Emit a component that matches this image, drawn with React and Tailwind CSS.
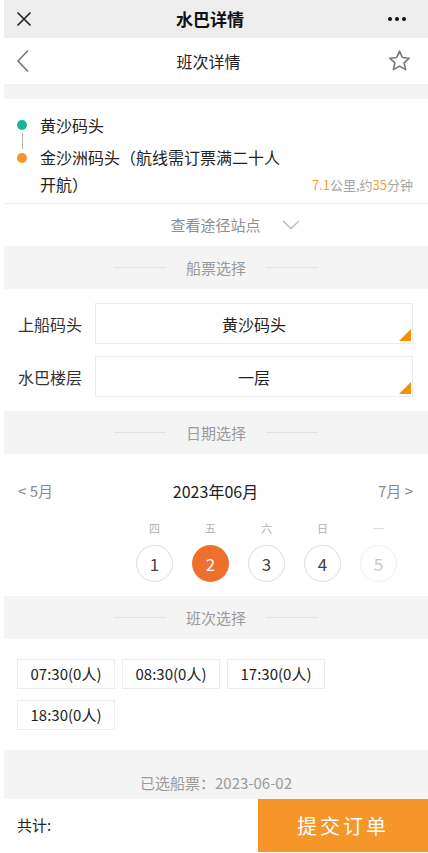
import { useState } from "react";

const font = { fontFamily: '"Noto Sans CJK SC", "Noto Sans", sans-serif' };

function SectionTitle({ children, className = "" }) {
  return (
    <div className={`flex items-center justify-center gap-[20px] bg-[#f4f4f4] ${className}`}>
      <span className="h-px w-[52px] bg-[#e2e2e2]" />
      <span className="text-[15px] leading-[22px] text-[#9a9a9a]">{children}</span>
      <span className="h-px w-[52px] bg-[#e2e2e2]" />
    </div>
  );
}

function Picker({ label, value }) {
  return (
    <div className="flex items-center">
      <span className="w-[91px] whitespace-nowrap pl-[14px] text-[16px] text-[#333]">{label}</span>
      <div className="relative flex h-[41px] w-[318px] items-center justify-center border border-[#ececec] bg-white text-[16px] text-[#222]">
        {value}
        <span className="absolute bottom-[2px] right-[1px] h-0 w-0 border-b-[12px] border-l-[12px] border-b-[#f39200] border-l-transparent" />
      </div>
    </div>
  );
}

const days = [
  { w: "四", d: 1 },
  { w: "五", d: 2 },
  { w: "六", d: 3 },
  { w: "日", d: 4 },
  { w: "一", d: 5, off: true },
];

const times = ["07:30(0人)", "08:30(0人)", "17:30(0人)", "18:30(0人)"];

export default function App() {
  const [picked, setPicked] = useState(2);

  return (
    <div className="min-h-[853px] bg-white pl-[4px]" style={font}>
      {/* wechat bar */}
      <div className="flex h-[38px] items-center justify-between bg-[#ededed] pl-[12px] pr-[22px]">
        <svg width="16" height="16" viewBox="0 0 16 16" className="text-[#222]">
          <path d="M1.5 1.5 14.5 14.5M14.5 1.5 1.5 14.5" stroke="currentColor" strokeWidth="1.6" />
        </svg>
        <span className="text-[17px] font-bold text-[#111]">水巴详情</span>
        <span className="flex gap-[3px]">
          <span className="h-[4px] w-[4px] rounded-full bg-[#111]" />
          <span className="h-[4px] w-[4px] rounded-full bg-[#111]" />
          <span className="h-[4px] w-[4px] rounded-full bg-[#111]" />
        </span>
      </div>

      {/* page header */}
      <div className="flex h-[47px] items-center justify-between border-b border-[#f0f0f0] pl-[12px] pr-[16px]">
        <svg width="14" height="24" viewBox="0 0 14 24">
          <path d="M12 1.5 2 12l10 10.5" fill="none" stroke="#777" strokeWidth="1.6" />
        </svg>
        <span className="text-[16px] text-[#222]">班次详情</span>
        <svg width="25" height="24" viewBox="0 0 24 24">
          <path
            d="M12 2.2l2.9 6.3 6.8.7-5.1 4.6 1.5 6.8L12 17.1l-6.1 3.5 1.5-6.8-5.1-4.6 6.8-.7z"
            fill="none"
            stroke="#777"
            strokeWidth="1.6"
            strokeLinejoin="round"
          />
        </svg>
      </div>
      <div className="h-[14px] bg-[#f4f4f4]" />

      {/* route */}
      <div className="relative h-[105px] border-b border-[#ececec] pt-[13px]">
        <div className="flex h-[26px] items-center">
          <span className="ml-[13px] h-[10px] w-[10px] rounded-full bg-[#13b698]" />
          <span className="ml-[13px] text-[16px] leading-[26px] text-[#222]">黄沙码头</span>
        </div>
        <div className="-my-[5px] ml-[17.5px] h-[16px] w-px bg-[#b5b5b5]" />
        <div className="flex items-start">
          <span className="ml-[13px] mt-[8.5px] h-[10px] w-[10px] shrink-0 rounded-full bg-[#f5972b]" />
          <span className="ml-[13px] w-[250px] text-[16px] leading-[27px] text-[#222]">
            金沙洲码头（航线需订票满二十人开航）
          </span>
        </div>
        <span className="absolute bottom-[8px] right-[15px] text-[13px] leading-[20px] text-[#a5a5a5]">
          <span className="text-[#f5a23a]">7.1</span>公里,约<span className="text-[#f5a23a]">35</span>分钟
        </span>
      </div>

      <div className="flex h-[42px] items-center justify-center gap-[21px]">
        <span className="w-[17px]" />
        <span className="text-[15px] leading-[22px] text-[#8e8e8e]">查看途径站点</span>
        <svg width="18" height="10" viewBox="0 0 18 10">
          <path d="M1 1l8 7.5L17 1" fill="none" stroke="#bbb" strokeWidth="1.3" />
        </svg>
      </div>

      <SectionTitle className="h-[43px]">船票选择</SectionTitle>
      <div className="flex h-[122px] flex-col gap-[12px] pt-[14px]">
        <Picker label="上船码头" value="黄沙码头" />
        <Picker label="水巴楼层" value="一层" />
      </div>

      <SectionTitle className="h-[43px]">日期选择</SectionTitle>
      <div className="h-[142px] pt-[26px]">
        <div className="flex h-[22px] items-center justify-between pl-[14px] pr-[15px]">
          <span className="text-[15px] text-[#8a8a8a]">&lt; 5月</span>
          <span className="text-[16px] text-[#222]">2023年06月</span>
          <span className="text-[15px] text-[#8a8a8a]">7月 &gt;</span>
        </div>
        <div className="mt-[18px] flex gap-[19px] pl-[132px]">
          {days.map((x) => (
            <button
              key={x.d}
              onClick={() => !x.off && setPicked(x.d)}
              className="flex w-[37px] flex-col items-center"
            >
              <span className={`h-[16px] text-[11px] leading-[16px] ${x.off ? "text-[#dcdcdc]" : "text-[#b0b0b0]"}`}>
                {x.w}
              </span>
              <span
                className={`mt-[9px] flex h-[37px] w-[37px] items-center justify-center rounded-full text-[17px] ${
                  picked === x.d
                    ? "bg-[#ef6f2e] text-white"
                    : x.off
                    ? "border border-[#f0f0f0] text-[#c8c8c8]"
                    : "border border-[#dcdcdc] text-[#444]"
                }`}
              >
                {x.d}
              </span>
            </button>
          ))}
        </div>
      </div>

      <SectionTitle className="h-[43px]">班次选择</SectionTitle>
      <div className="flex h-[111px] flex-wrap content-start gap-x-[7px] gap-y-[11px] pl-[13px] pt-[20px]">
        {times.map((t) => (
          <span
            key={t}
            className="flex h-[30px] w-[98px] items-center justify-center border border-[#ececec] text-[15px] text-[#222]"
          >
            {t}
          </span>
        ))}
      </div>

      <div className="flex h-[49px] items-end justify-center bg-[#f4f4f4] pb-[5px]">
        <span className="text-[15px] leading-[22px] text-[#9a9a9a]">已选船票：2023-06-02</span>
      </div>

      <div className="flex h-[53px] items-center justify-between">
        <span className="pl-[13px] text-[15px] text-[#222]">共计:</span>
        <button className="flex h-full w-[170px] items-center justify-center bg-[#f5952a] text-[20px] tracking-[3px] text-white">
          提交订单
        </button>
      </div>
    </div>
  );
}
